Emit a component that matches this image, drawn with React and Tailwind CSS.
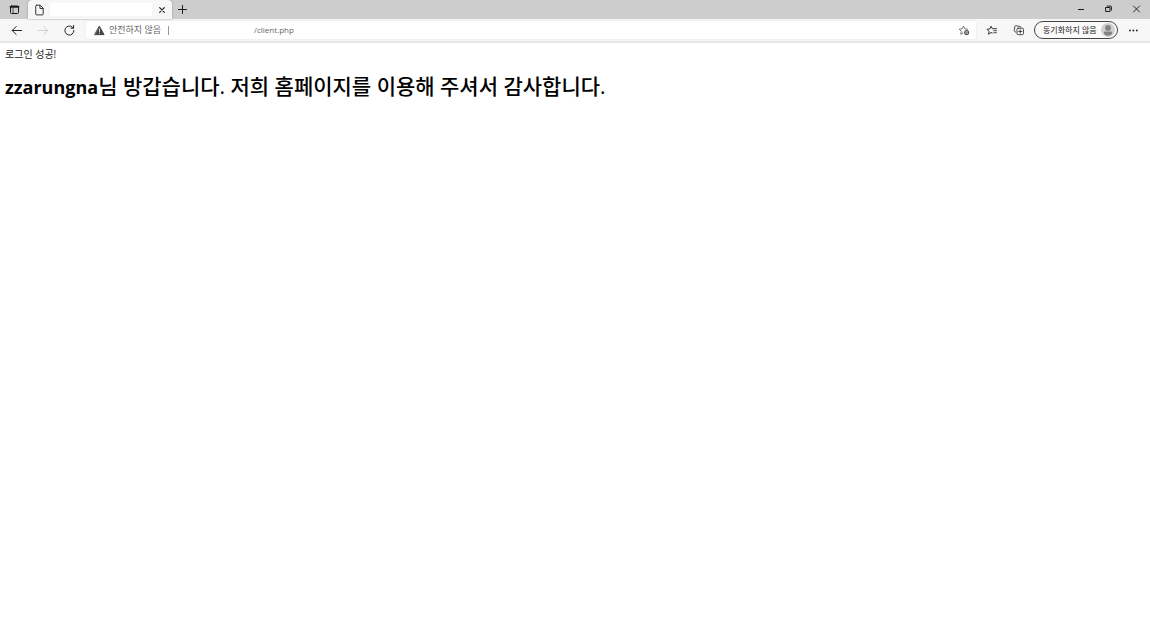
import React from "react";

const Icon = ({ size = 12, className = "", children }) => (
  <svg
    width={size}
    height={size}
    viewBox="0 0 12 12"
    fill="none"
    stroke="currentColor"
    strokeLinecap="round"
    strokeLinejoin="round"
    className={`shrink-0 ${className}`}
    aria-hidden="true"
  >
    {children}
  </svg>
);

const IconButton = ({ label, className = "", children }) => (
  <button
    type="button"
    aria-label={label}
    className={`flex shrink-0 items-center justify-center ${className}`}
  >
    {children}
  </button>
);

const TitleBar = () => (
  <div className="flex h-[19px] items-stretch bg-[#cdcdcd] text-[#1b1b1b]">
    <IconButton label="탭 작업 메뉴" className="w-7">
      <Icon>
        <rect x="2.500" y="2" width="8" height="7.500" rx="1" strokeWidth="1" />
        <path d="M2.500 2.800h8" strokeWidth="1.800" />
        <path d="M5 4v5" strokeWidth="0.7" />
      </Icon>
    </IconButton>

    <div className="flex w-36 items-center rounded-t-sm bg-[#f7f7f7] pl-1 shadow-[0_0_2px_#888]">
      <Icon size={14} className="mr-1 text-[#333]">
        <path
          d="M4 1.900h3L9.600 4.500v4.900a.8.8 0 0 1-.8.8H4a.8.8 0 0 1-.8-.8V2.700a.8.8 0 0 1 .8-.8zM6.800 2v2.700h2.700"
          strokeWidth="0.85"
        />
      </Icon>
      <div className="h-[13px] flex-1 bg-white" />
      <IconButton label="탭 닫기" className="w-5">
        <Icon size={10}>
          <path d="M3.200 3.200l5.600 5.600M8.800 3.200L3.200 8.800" strokeWidth="1.300" />
        </Icon>
      </IconButton>
    </div>

    <IconButton label="새 탭" className="w-5">
      <Icon size={12}>
        <path d="M6.500 1.500v8M2.500 5.500h8" strokeWidth="1" />
      </Icon>
    </IconButton>

    <div className="ml-auto flex">
      <IconButton label="최소화" className="w-7">
        <Icon>
          <path d="M4 5.500h6" strokeWidth="1" strokeLinecap="butt" />
        </Icon>
      </IconButton>
      <IconButton label="이전 크기로 복원" className="w-7">
        <Icon>
          <rect x="4" y="3.500" width="4" height="4" strokeWidth="1" />
          <path d="M5.200 2.100h3.600a.6.6 0 0 1 .6.6v3.400" strokeWidth="1" />
        </Icon>
      </IconButton>
      <IconButton label="닫기" className="w-7">
        <Icon>
          <path d="M3.500 2l6 6M9.500 2l-6 6" strokeWidth="0.9" />
        </Icon>
      </IconButton>
    </div>
  </div>
);

const AddressBar = () => (
  <div className="flex h-[18px] flex-1 items-center rounded-xs bg-white pr-1 pl-2 shadow-[0_0_2px_#ddd]">
    <Icon size={11} className="mr-1 text-[#444]">
      <path d="M6 1.500L11 10.500H1z" fill="currentColor" strokeWidth="1" />
      <path d="M6 4.500v3M6 9v.2" stroke="#fff" strokeWidth="0.9" />
    </Icon>
    <span className="shrink-0 text-[9px] text-[#666]">안전하지 않음</span>
    <span className="ml-[7px] h-[9px] w-px bg-[#999]" />
    <input
      type="text"
      aria-label="주소"
      defaultValue="/client.php"
      className="ml-[85px] min-w-0 flex-1 bg-transparent text-[8px] text-[#666] outline-none"
    />
    <IconButton label="즐겨찾기에 추가" className="w-4">
      <Icon className="text-[#555]">
        <path
          d="M5 9L2.800 10.300l.5-3L1.200 5.200l3-.4L5.500 2l1.300 2.800 2.900.4"
          strokeWidth="0.8"
        />
        <circle cx="8.600" cy="8.600" r="2" strokeWidth="1.100" />
        <path d="M8.600 7.700v1.800M7.700 8.600h1.800" strokeWidth="0.6" />
      </Icon>
    </IconButton>
  </div>
);

const Toolbar = () => (
  <div className="flex h-6 items-center border-b-2 border-[#e6e6e6] bg-[#f7f7f7] text-[#222]">
    <div className="flex w-[86px] shrink-0 items-center pl-1">
      <IconButton label="뒤로" className="w-[26px]">
        <Icon>
          <path d="M10.500 6.500H1.200M5.200 2.500l-4 4 4 4" strokeWidth="1" />
        </Icon>
      </IconButton>
      <IconButton label="앞으로" className="w-[26px] text-[#d0d0d0]">
        <Icon>
          <path d="M1.500 6.500h9.300M6.800 2.500l4 4-4 4" strokeWidth="1" />
        </Icon>
      </IconButton>
      <IconButton label="새로 고침" className="w-[26px]">
        <Icon>
          <path d="M10.900 6.500a4.500 4.500 0 1 1-1.500-3.300l1 .9" strokeWidth="1" />
          <path d="M10.600 1.500v2.700H7.900" strokeWidth="1" />
        </Icon>
      </IconButton>
    </div>

    <AddressBar />

    <IconButton label="즐겨찾기" className="ml-2 w-4">
      <Icon>
        <path
          d="M6.200 9L5 8.500 2.600 10.300l.4-3L1 5.300l2.900-.4L5 2.200l1.300 2.500h4.200"
          strokeWidth="0.9"
        />
        <path d="M7.700 6.700h2.800M7.700 8.700h2.800" strokeWidth="0.8" />
      </Icon>
    </IconButton>
    <IconButton label="컬렉션" className="ml-[11px] w-4">
      <Icon>
        <path
          d="M2.800 8.200L1.700 7.500a1 1 0 0 1-.5-1.100L1.900 2.600a1 1 0 0 1 1.200-.8l3.900.6a1 1 0 0 1 .8.800"
          strokeWidth="0.8"
        />
        <rect x="4" y="4.200" width="6.500" height="6.500" rx="1.200" strokeWidth="0.8" />
        <path d="M7.250 5.900v3.200M5.700 7.450h3.200" strokeWidth="0.8" />
      </Icon>
    </IconButton>
    <button
      type="button"
      className="ml-[7px] flex h-[18px] w-[84px] shrink-0 items-center justify-between rounded-full border border-[#444] bg-[#fafafa] pr-[2px] pl-2"
    >
      <span className="text-[8px] whitespace-nowrap">동기화하지 않음</span>
      <svg width="14" height="14" viewBox="0 0 14 14" aria-hidden="true">
        <circle cx="7" cy="7" r="7" fill="#d2d0ce" />
        <circle cx="7" cy="4.900" r="2.900" fill="#858381" />
        <path d="M2.800 9.600a1 1 0 0 1 1-1h6.400a1 1 0 0 1 1 1c0 1.900-1.800 3.200-4.200 3.200S2.800 11.500 2.800 9.600z" fill="#858381" />
      </svg>
    </button>
    <IconButton label="설정 및 기타" className="mx-2 w-4">
      <Icon>
        <g fill="currentColor" stroke="none">
          <circle cx="2" cy="6.500" r="0.9" />
          <circle cx="5.400" cy="6.500" r="0.9" />
          <circle cx="8.800" cy="6.500" r="0.9" />
        </g>
      </Icon>
    </IconButton>
  </div>
);

const App = () => {
  const userId = "zzarungna";

  return (
    <div className="min-h-screen bg-white font-['Open_Sans','Noto_Sans_CJK_KR',sans-serif]">
      <header>
        <TitleBar />
        <Toolbar />
      </header>
      <main className="px-[5px] pt-1 text-black">
        <p className="text-[10px] leading-[14px] text-[#222]">로그인 성공!</p>
        <h1 className="mt-3 text-[21px] leading-[26px] font-medium">
          <span className="text-[18px] font-bold">{userId}</span>님 방갑습니다.
          저희 홈페이지를 이용해 주셔서 감사합니다.
        </h1>
      </main>
    </div>
  );
};

export default App;
